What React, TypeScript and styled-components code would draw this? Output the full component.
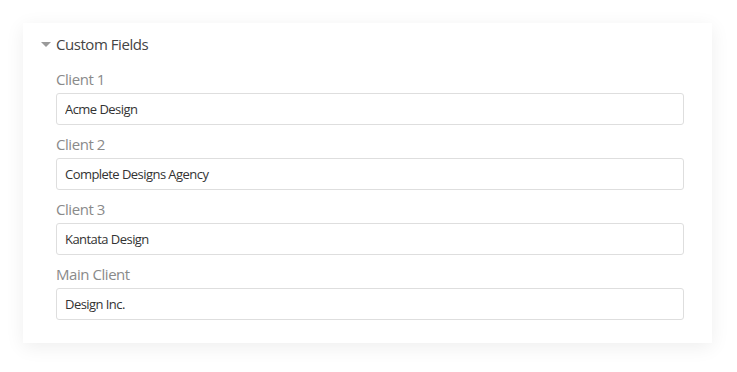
import React from "react";
import styled, { createGlobalStyle } from "styled-components";

const Global = createGlobalStyle`
  html, body { margin: 0; padding: 0; background: #ffffff; }
  body { font-family: "Open Sans", "Noto Sans", sans-serif; }
  * { box-sizing: border-box; }
`;

const Page = styled.div`
  padding: 23px 25px 28px 23px;
`;

const Card = styled.section`
  width: 689px;
  height: 320px;
  background: #ffffff;
  box-shadow: 0 4px 18px rgba(0, 0, 0, 0.07);
  padding: 11px 28px 23px 18px;
  display: flex;
  flex-direction: column;
`;

const Header = styled.div`
  display: flex;
  align-items: center;
  gap: 5px;
  height: 20px;
  font-size: 15px;
  letter-spacing: -0.45px;
  color: #444;
`;

const Caret = styled.span`
  width: 0;
  height: 0;
  border-left: 5px solid transparent;
  border-right: 5px solid transparent;
  border-top: 5px solid #9a9a9a;
  margin-top: 1px;
`;

const Fields = styled.div`
  margin-top: 15px;
  padding-left: 15px;
  display: flex;
  flex-direction: column;
  gap: 9px;
`;

const Field = styled.div`
  display: flex;
  flex-direction: column;
  gap: 4px;
`;

const Label = styled.label`
  font-size: 15px;
  line-height: 20px;
  letter-spacing: -0.45px;
  color: #8a8a8a;
`;

const Input = styled.input`
  height: 32px;
  width: 100%;
  border: 1px solid #dedede;
  border-radius: 3px;
  padding: 0 8px;
  font-family: "Open Sans", "Noto Sans", sans-serif;
  font-size: 13px;
  letter-spacing: -0.55px;
  color: #333;
  background: #fff;
  outline: none;
`;

const fields = [
  { label: "Client 1", value: "Acme Design" },
  { label: "Client 2", value: "Complete Designs Agency" },
  { label: "Client 3", value: "Kantata Design" },
  { label: "Main Client", value: "Design Inc." },
];

export default function App() {
  return (
    <>
      <Global />
      <Page>
        <Card>
          <Header>
            <Caret />
            <span>Custom Fields</span>
          </Header>
          <Fields>
            {fields.map((f) => (
              <Field key={f.label}>
                <Label>{f.label}</Label>
                <Input defaultValue={f.value} readOnly />
              </Field>
            ))}
          </Fields>
        </Card>
      </Page>
    </>
  );
}
